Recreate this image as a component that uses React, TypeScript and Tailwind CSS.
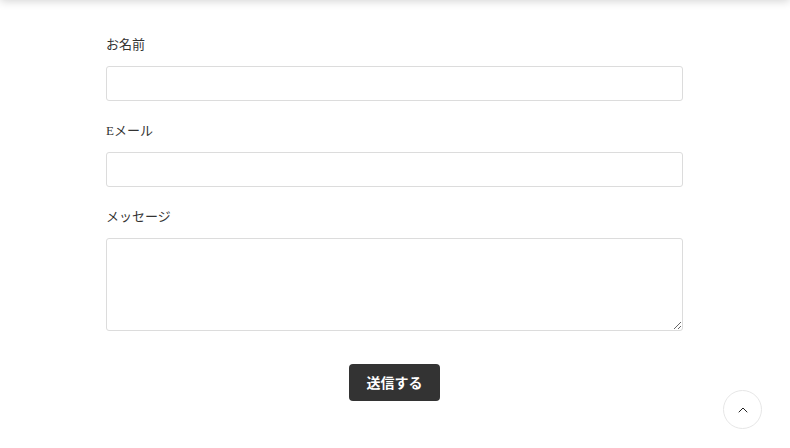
import { ChevronUp } from "lucide-react";

const labelCls =
  "block text-[13px] leading-5 text-[#333] font-['Liberation_Serif','Noto_Sans_CJK_JP',serif] mb-[11px]";
const fieldCls =
  "block w-full rounded-[3px] border border-[#dcdcdc] bg-white px-3 text-sm text-[#333] outline-none";

export default function App() {
  return (
    <div className="relative min-h-[448px] bg-white px-[106px] font-['Noto_Sans_CJK_JP',sans-serif]">
      {/* header sits just above the viewport, only its shadow shows */}
      <div className="fixed left-0 right-0 top-[-60px] h-[60px] bg-white shadow-[0_1px_9px_rgba(0,0,0,0.18)]" />

      <form className="max-w-[577px] pt-[35px]" onSubmit={(e) => e.preventDefault()}>
        <label className={labelCls}>お名前</label>
        <input type="text" className={`${fieldCls} h-[35px] mb-5`} />

        <label className={labelCls}>Eメール</label>
        <input type="email" className={`${fieldCls} h-[35px] mb-5`} />

        <label className={labelCls}>メッセージ</label>
        <textarea className={`${fieldCls} h-[93px] py-2`} />

        <div className="mt-[33px] flex justify-center">
          <button
            type="submit"
            className="h-[37px] w-[91px] rounded-[4px] bg-[#333] text-[14px] font-bold text-white"
          >
            送信する
          </button>
        </div>
      </form>

      <button
        className="fixed bottom-[19px] right-[28px] flex h-[39px] w-[39px] items-center justify-center rounded-full border border-[#e6e6e6] bg-white text-[#222]"
        aria-label="top"
      >
        <ChevronUp size={16} strokeWidth={1.5} />
      </button>
    </div>
  );
}
